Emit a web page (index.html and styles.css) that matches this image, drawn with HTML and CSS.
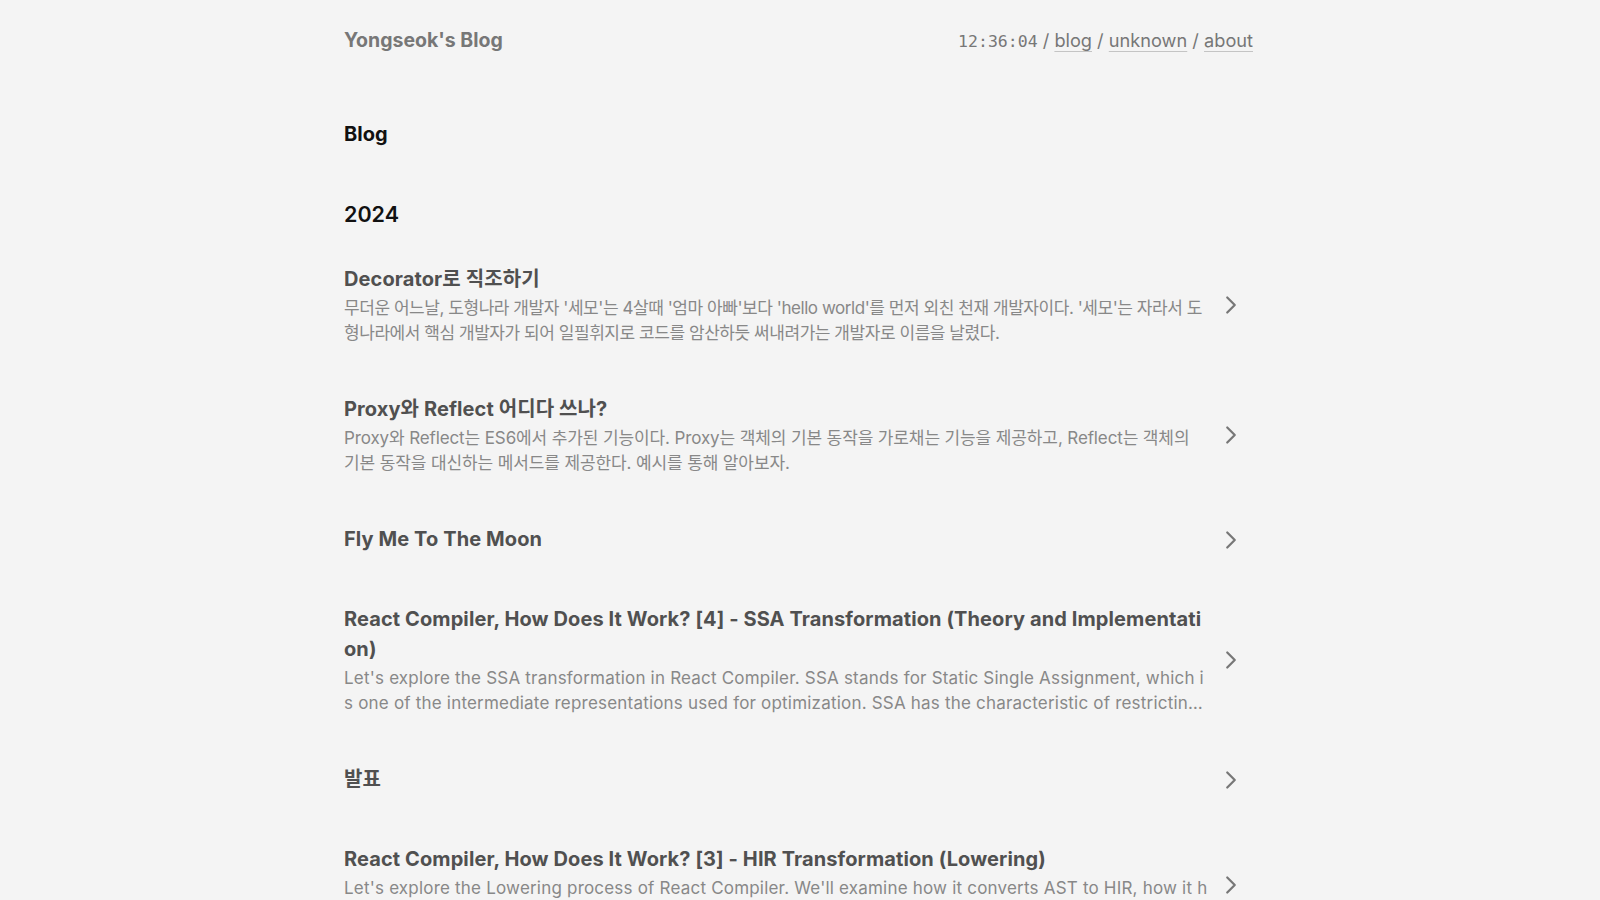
FILE: index.html
```html
<!DOCTYPE html>
<html lang="ko">
<head>
<meta charset="utf-8">
<title>Blog | Yongseok's Blog</title>
<link rel="stylesheet" href="styles.css">
</head>
<body>
<header class="site-header">
  <a class="brand" href="#">Yongseok's Blog</a>
  <nav class="nav">
    <span class="clock">12:36:04</span> / <a href="#">blog</a> / <a href="#">unknown</a> / <a href="#">about</a>
  </nav>
</header>
<main class="page">
  <h1 class="page-title">Blog</h1>
  <section class="year">
    <h2 class="year-title">2024</h2>
    <ul class="posts">
      <li class="post">
        <a class="post-link" href="#">
          <div class="post-text">
            <h3 class="post-title">Decorator로 직조하기</h3>
            <p class="post-desc desc-ko">무더운 어느날, 도형나라 개발자 '세모'는 4살때 '엄마 아빠'보다 'hello world'를 먼저 외친 천재 개발자이다. '세모'는 자라서 도형나라에서 핵심 개발자가 되어 일필휘지로 코드를 암산하듯 써내려가는 개발자로 이름을 날렸다.</p>
          </div>
          <svg class="chev" viewBox="0 0 24 24" aria-hidden="true"><path d="m9 18 6-6-6-6"/></svg>
        </a>
      </li>
      <li class="post">
        <a class="post-link" href="#">
          <div class="post-text">
            <h3 class="post-title">Proxy와 Reflect 어디다 쓰나?</h3>
            <p class="post-desc desc-mix">Proxy와 Reflect는 ES6에서 추가된 기능이다. Proxy는 객체의 기본 동작을 가로채는 기능을 제공하고, Reflect는 객체의 기본 동작을 대신하는 메서드를 제공한다. 예시를 통해 알아보자.</p>
          </div>
          <svg class="chev" viewBox="0 0 24 24" aria-hidden="true"><path d="m9 18 6-6-6-6"/></svg>
        </a>
      </li>
      <li class="post">
        <a class="post-link" href="#">
          <div class="post-text">
            <h3 class="post-title">Fly Me To The Moon</h3>
          </div>
          <svg class="chev" viewBox="0 0 24 24" aria-hidden="true"><path d="m9 18 6-6-6-6"/></svg>
        </a>
      </li>
      <li class="post">
        <a class="post-link" href="#">
          <div class="post-text">
            <h3 class="post-title">React Compiler, How Does It Work? [4] - SSA Transformation (Theory and Implementation)</h3>
            <p class="post-desc">Let's explore the SSA transformation in React Compiler. SSA stands for Static Single Assignment, which is one of the intermediate representations used for optimization. SSA has the characteristic of restricting each variable to be assigned only once.</p>
          </div>
          <svg class="chev" viewBox="0 0 24 24" aria-hidden="true"><path d="m9 18 6-6-6-6"/></svg>
        </a>
      </li>
      <li class="post">
        <a class="post-link" href="#">
          <div class="post-text">
            <h3 class="post-title">발표</h3>
          </div>
          <svg class="chev" viewBox="0 0 24 24" aria-hidden="true"><path d="m9 18 6-6-6-6"/></svg>
        </a>
      </li>
      <li class="post">
        <a class="post-link" href="#">
          <div class="post-text">
            <h3 class="post-title">React Compiler, How Does It Work? [3] - HIR Transformation (Lowering)</h3>
            <p class="post-desc">Let's explore the Lowering process of React Compiler. We'll examine how it converts AST to HIR, how it handles control flow and the structure of the resulting representation.</p>
          </div>
          <svg class="chev" viewBox="0 0 24 24" aria-hidden="true"><path d="m9 18 6-6-6-6"/></svg>
        </a>
      </li>
    </ul>
  </section>
</main>
</body>
</html>
```

FILE: styles.css
```css
* { box-sizing: border-box; }

html, body {
  margin: 0;
  padding: 0;
  background: #f4f4f4;
}

body {
  font-family: Inter, "Noto Sans CJK KR", "Noto Sans", sans-serif;
  color: #555;
}

a { color: inherit; text-decoration: none; }

.site-header {
  max-width: 960px;
  margin: 0 auto;
  padding: 0 24px;
  height: 80px;
  display: flex;
  align-items: center;
  justify-content: space-between;
}

.brand {
  font-size: 19.5px;
  font-weight: 700;
  color: #777;
}

.nav {
  font-size: 18.2px;
  color: #777;
  white-space: nowrap;
  padding-right: 3px;
}

.nav a {
  text-decoration: underline;
  text-decoration-color: #c4c4c4;
  text-decoration-thickness: 1px;
  text-underline-offset: 4px;
}

.clock {
  font-family: "DejaVu Sans Mono", "Liberation Mono", monospace;
  font-size: 16.5px;
}

.page {
  max-width: 960px;
  margin: 0 auto;
  padding: 0 24px;
}

.page-title {
  margin: 39px 0 0;
  font-size: 20px;
  line-height: 30px;
  font-weight: 700;
  color: #111;
}

.year-title {
  margin: 49px 0 9px;
  font-size: 21.5px;
  line-height: 32px;
  font-weight: 600;
  color: #111;
}

.posts {
  list-style: none;
  margin: 0;
  padding: 0;
}

.post-link {
  display: flex;
  align-items: center;
  gap: 8px;
  padding: 25px 10px 24px 0;
}

.post-text {
  flex: 1;
  min-width: 0;
}

.post-title {
  margin: 0;
  font-size: 20px;
  line-height: 30px;
  font-weight: 700;
  color: #505050;
  letter-spacing: 0.1px;
  word-break: break-all;
}

.post-title:only-child {
  margin-bottom: 1px;
}

.post-desc {
  margin: 2px 0 0;
  font-size: 17px;
  line-height: 24.5px;
  color: #888;
  letter-spacing: 0.2px;
  word-break: break-all;
  display: -webkit-box;
  -webkit-line-clamp: 2;
  -webkit-box-orient: vertical;
  overflow: hidden;
}

.desc-ko { letter-spacing: -0.45px; }
.desc-mix { letter-spacing: -0.12px; }

.chev {
  flex: 0 0 30px;
  width: 30px;
  height: 30px;
  fill: none;
  stroke: #777;
  stroke-width: 1.8;
  stroke-linecap: round;
  stroke-linejoin: round;
}
```
